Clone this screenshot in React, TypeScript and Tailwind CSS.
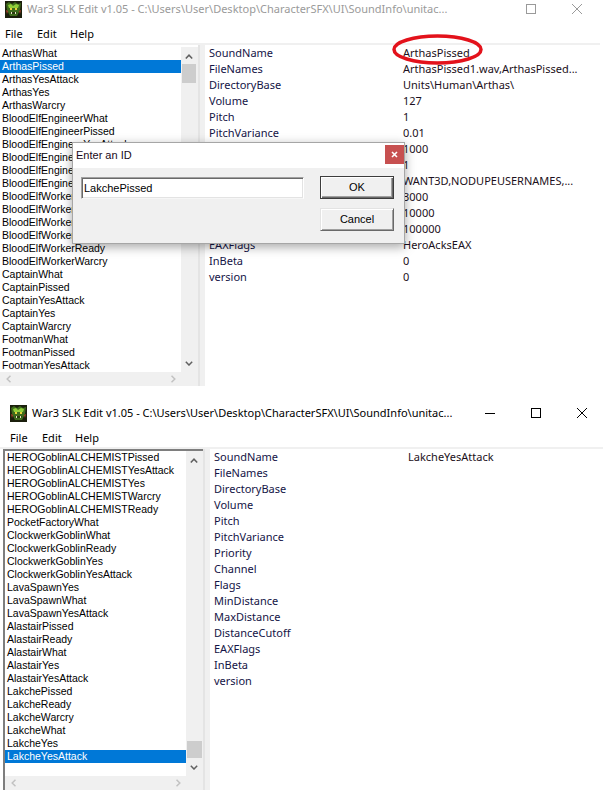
import React from "react";

const UI = "font-['Noto_Sans',sans-serif]";
const MS = "font-['Liberation_Sans',Arial,sans-serif]";

const FIELDS = [
  "SoundName",
  "FileNames",
  "DirectoryBase",
  "Volume",
  "Pitch",
  "PitchVariance",
  "Priority",
  "Channel",
  "Flags",
  "MinDistance",
  "MaxDistance",
  "DistanceCutoff",
  "EAXFlags",
  "InBeta",
  "version",
];

const TOP_VALUES = [
  "ArthasPissed",
  "ArthasPissed1.wav,ArthasPissed...",
  "Units\\Human\\Arthas\\",
  "127",
  "1",
  "0.01",
  "1000",
  "1",
  "WANT3D,NODUPEUSERNAMES,...",
  "3000",
  "10000",
  "100000",
  "HeroAcksEAX",
  "0",
  "0",
];

const BOTTOM_VALUES = ["LakcheYesAttack"];

const TOP_ITEMS = [
  "ArthasWhat",
  "ArthasPissed",
  "ArthasYesAttack",
  "ArthasYes",
  "ArthasWarcry",
  "BloodElfEngineerWhat",
  "BloodElfEngineerPissed",
  "BloodElfEngineerYesAttack",
  "BloodElfEngineerYes",
  "BloodElfEngineerWarcry",
  "BloodElfEngineerReady",
  "BloodElfWorkerWhat",
  "BloodElfWorkerPissed",
  "BloodElfWorkerYesAttack",
  "BloodElfWorkerYes",
  "BloodElfWorkerReady",
  "BloodElfWorkerWarcry",
  "CaptainWhat",
  "CaptainPissed",
  "CaptainYesAttack",
  "CaptainYes",
  "CaptainWarcry",
  "FootmanWhat",
  "FootmanPissed",
  "FootmanYesAttack",
];

const BOTTOM_ITEMS = [
  "HEROGoblinALCHEMISTPissed",
  "HEROGoblinALCHEMISTYesAttack",
  "HEROGoblinALCHEMISTYes",
  "HEROGoblinALCHEMISTWarcry",
  "HEROGoblinALCHEMISTReady",
  "PocketFactoryWhat",
  "ClockwerkGoblinWhat",
  "ClockwerkGoblinReady",
  "ClockwerkGoblinYes",
  "ClockwerkGoblinYesAttack",
  "LavaSpawnYes",
  "LavaSpawnWhat",
  "LavaSpawnYesAttack",
  "AlastairPissed",
  "AlastairReady",
  "AlastairWhat",
  "AlastairYes",
  "AlastairYesAttack",
  "LakchePissed",
  "LakcheReady",
  "LakcheWarcry",
  "LakcheWhat",
  "LakcheYes",
  "LakcheYesAttack",
];

function WarIcon() {
  return (
    <svg width="17" height="17" viewBox="0 0 17 17">
      <rect x="0" y="0" width="17" height="17" fill="#1b1f0c" />
      <path d="M1 3 L4 1 L7 3 L10 1 L13 3 L16 2 L15 9 L12 15 L5 15 L2 9 Z" fill="#3e6b1c" />
      <path d="M3 4 L6 3 L8 5 L11 3 L14 4 L13 7 L4 7 Z" fill="#8fcf3a" />
      <rect x="5" y="7" width="2" height="2" fill="#e8d23a" />
      <rect x="10" y="7" width="2" height="2" fill="#e8d23a" />
      <path d="M5 11 L12 11 L11 13 L6 13 Z" fill="#2a3a10" />
      <rect x="6" y="11" width="1" height="2" fill="#e9e4c8" />
      <rect x="10" y="11" width="1" height="2" fill="#e9e4c8" />
      <path d="M1 9 L3 10 L2 13 Z" fill="#b0402a" />
      <path d="M16 9 L14 10 L15 13 Z" fill="#b0402a" />
    </svg>
  );
}

function Chevron({ dir, color }: { dir: "up" | "down" | "left" | "right"; color: string }) {
  if (dir === "up" || dir === "down") {
    const d = dir === "up" ? "M0.8 4.5 L4 1.2 L7.2 4.5" : "M0.8 0.8 L4 4 L7.2 0.8";
    return (
      <svg width="8" height="5" viewBox="0 0 8 5">
        <path d={d} stroke={color} strokeWidth="1.5" fill="none" />
      </svg>
    );
  }
  const d = dir === "left" ? "M4.5 0.8 L1.2 4 L4.5 7.2" : "M0.5 0.8 L3.8 4 L0.5 7.2";
  return (
    <svg width="5" height="8" viewBox="0 0 5 8">
      <path d={d} stroke={color} strokeWidth="1.5" fill="none" />
    </svg>
  );
}

type WinProps = {
  active: boolean;
  framed: boolean;
  items: string[];
  selected: number;
  values: string[];
  thumbTop: "top" | "bottom";
  className: string;
};

function Window({ active, framed, items, selected, values, thumbTop, className }: WinProps) {
  const glyph = active ? "#000000" : "#9a9a9a";
  return (
    <div className={`w-[605px] h-[390px] shrink-0 flex flex-col bg-white ${className}`}>
      {/* title bar */}
      <div className="h-[26px] flex items-center">
        <div className="ml-[10px] mt-[1px] flex">
          <WarIcon />
        </div>
        <div
          className={`ml-[5px] ${UI} text-[11px] leading-[14px] whitespace-nowrap ${
            active ? "text-black" : "text-[#9a9a9a]"
          }`}
        >
          War3 SLK Edit v1.05 - C:\Users\User\Desktop\CharacterSFX\UI\SoundInfo\unitac...
        </div>
        <div className="ml-auto flex h-full">
          <div className="w-[46px] h-full flex items-center justify-center">
            {active && (
              <svg width="10" height="10" viewBox="0 0 10 10">
                <path d="M0 5.5 H10" stroke={glyph} strokeWidth="1" />
              </svg>
            )}
          </div>
          <div className="w-[46px] h-full flex items-center justify-center">
            <svg width="10" height="10" viewBox="0 0 10 10">
              <rect x="0.5" y="0.5" width="9" height="9" stroke={glyph} strokeWidth="1" fill="none" />
            </svg>
          </div>
          <div className="w-[46px] h-full flex items-center justify-center">
            <svg width="10" height="10" viewBox="0 0 10 10">
              <path d="M0 0 L10 10 M10 0 L0 10" stroke={glyph} strokeWidth="1" />
            </svg>
          </div>
        </div>
      </div>

      {/* menu bar */}
      <div className={`h-[21px] flex items-center pt-[3px] ${UI} text-[11px] text-black`}>
        <span className="ml-[10px] w-[32px]">File</span>
        <span className="w-[33px]">Edit</span>
        <span>Help</span>
      </div>
      <div className="h-[2px] bg-[#f0f0f0]" />

      {/* content */}
      <div className="h-[341px] flex">
        <div className="w-[3px] bg-white" />
        <div
          className={`w-[200px] flex flex-col border-t-2 border-l-2 ${
            framed ? "border-[#7e7e7e]" : "border-white"
          }`}
        >
          <div className="h-[325px] flex">
            <div className="w-[181px] bg-white flex flex-col overflow-hidden">
              {items.map((it, i) => (
                <div
                  key={it}
                  className={`h-[13px] shrink-0 leading-[13px] pl-[2px] ${MS} text-[10.5px] whitespace-nowrap ${
                    i === selected ? "bg-[#0078d7] text-white" : "text-black"
                  }`}
                >
                  {it}
                </div>
              ))}
            </div>
            <div className="w-[16px] bg-[#f0f0f0] flex flex-col items-center">
              <div className="h-[13px] flex items-end pb-[1px]">
                <Chevron dir="up" color="#606060" />
              </div>
              {thumbTop === "top" ? (
                <div className="mt-[4px] w-[14px] h-[19px] bg-[#cdcdcd]" />
              ) : (
                <div className="mt-[277px] w-[15px] h-[17px] bg-[#cdcdcd]" />
              )}
              <div className="flex-1" />
              <div className="h-[17px] flex items-start pt-[6px]">
                <Chevron dir="down" color="#606060" />
              </div>
            </div>
            <div className="w-[1px] bg-[#f0f0f0]" />
          </div>
          <div className="h-[14px] flex bg-[#f0f0f0]">
            <div className="w-[181px] flex items-center justify-between">
              <div className="w-[16px] flex justify-center">
                <Chevron dir="left" color="#c2c2c2" />
              </div>
              <div className="w-[16px] flex justify-center">
                <Chevron dir="right" color="#c2c2c2" />
              </div>
            </div>
          </div>
        </div>
        <div className="w-[7px] bg-[#f0f0f0] flex">
          <div className="w-[2px] bg-[#e4e4e4]" />
        </div>
        <div className={`flex-1 bg-white flex flex-col pl-[4px] ${UI} text-[11px]`}>
          {FIELDS.map((f, i) => (
            <div key={f} className="h-[16px] shrink-0 flex items-center whitespace-nowrap">
              <span className="w-[194px] text-[#141446]">{f}</span>
              <span className="text-[#1c1020]">{values[i] ?? ""}</span>
            </div>
          ))}
        </div>
      </div>
    </div>
  );
}

function Dialog() {
  return (
    <div className="absolute left-[72px] top-[142px] w-[333px] h-[102px] border border-[#a6a6a6] bg-[#f0f0f0] shadow-[0_3px_10px_rgba(0,0,0,0.35)] flex flex-col">
      <div className="h-[25px] bg-white flex items-start">
        <span className={`${MS} text-[11px] leading-[13px] mt-[6px] ml-[3px] text-[#1a0a20]`}>Enter an ID</span>
        <div className="ml-auto mt-[2px] w-[19px] h-[19px] bg-[#c75050] flex items-center justify-center">
          <svg width="7" height="7" viewBox="0 0 7 7">
            <path d="M1 1 L6 6 M6 1 L1 6" stroke="#ffffff" strokeWidth="1.6" />
          </svg>
        </div>
      </div>
      <div className="flex-1 flex items-start pt-[8px] pl-[8px]">
        <div className="mt-[1px] w-[223px] h-[22px] bg-white border border-t-[#a0a0a0] border-l-[#a0a0a0] border-r-white border-b-[#f6f6f6] shadow-[inset_1px_1px_0_#696969,inset_-1px_-1px_0_#e3e3e3] flex items-center pl-[2px]">
          <span className={`${MS} text-[11px] text-black`}>LakchePissed</span>
        </div>
        <div className="ml-[16px] flex flex-col">
          <div className="w-[74px] h-[23px] border border-[#3c3c3c] shadow-[inset_1px_1px_0_#ffffff,inset_-1px_-1px_0_#696969,inset_-2px_-2px_0_#a0a0a0] flex items-center justify-center">
            <span className={`${MS} text-[11px] text-black`}>OK</span>
          </div>
          <div className="mt-[9px] w-[74px] h-[23px] border border-t-[#e3e3e3] border-l-[#e3e3e3] border-r-[#696969] border-b-[#696969] shadow-[inset_1px_1px_0_#ffffff,inset_-1px_-1px_0_#a0a0a0] flex items-center justify-center">
            <span className={`${MS} text-[11px] text-black`}>Cancel</span>
          </div>
        </div>
      </div>
    </div>
  );
}

export default function App() {
  return (
    <div className="relative w-[603px] h-[790px] overflow-hidden bg-white flex flex-col">
      <Window
        active={false}
        framed={false}
        items={TOP_ITEMS}
        selected={1}
        values={TOP_VALUES}
        thumbTop="top"
        className="-ml-[5px] -mt-[4px]"
      />
      <Window
        active={true}
        framed={true}
        items={BOTTOM_ITEMS}
        selected={23}
        values={BOTTOM_VALUES}
        thumbTop="bottom"
        className="mt-[14px]"
      />
      <Dialog />
      <svg className="absolute left-[391px] top-[33px]" width="94" height="34" viewBox="0 0 94 34">
        <ellipse cx="46.5" cy="16.5" rx="43.5" ry="13.5" stroke="#e3121b" strokeWidth="3.5" fill="none" />
      </svg>
    </div>
  );
}
